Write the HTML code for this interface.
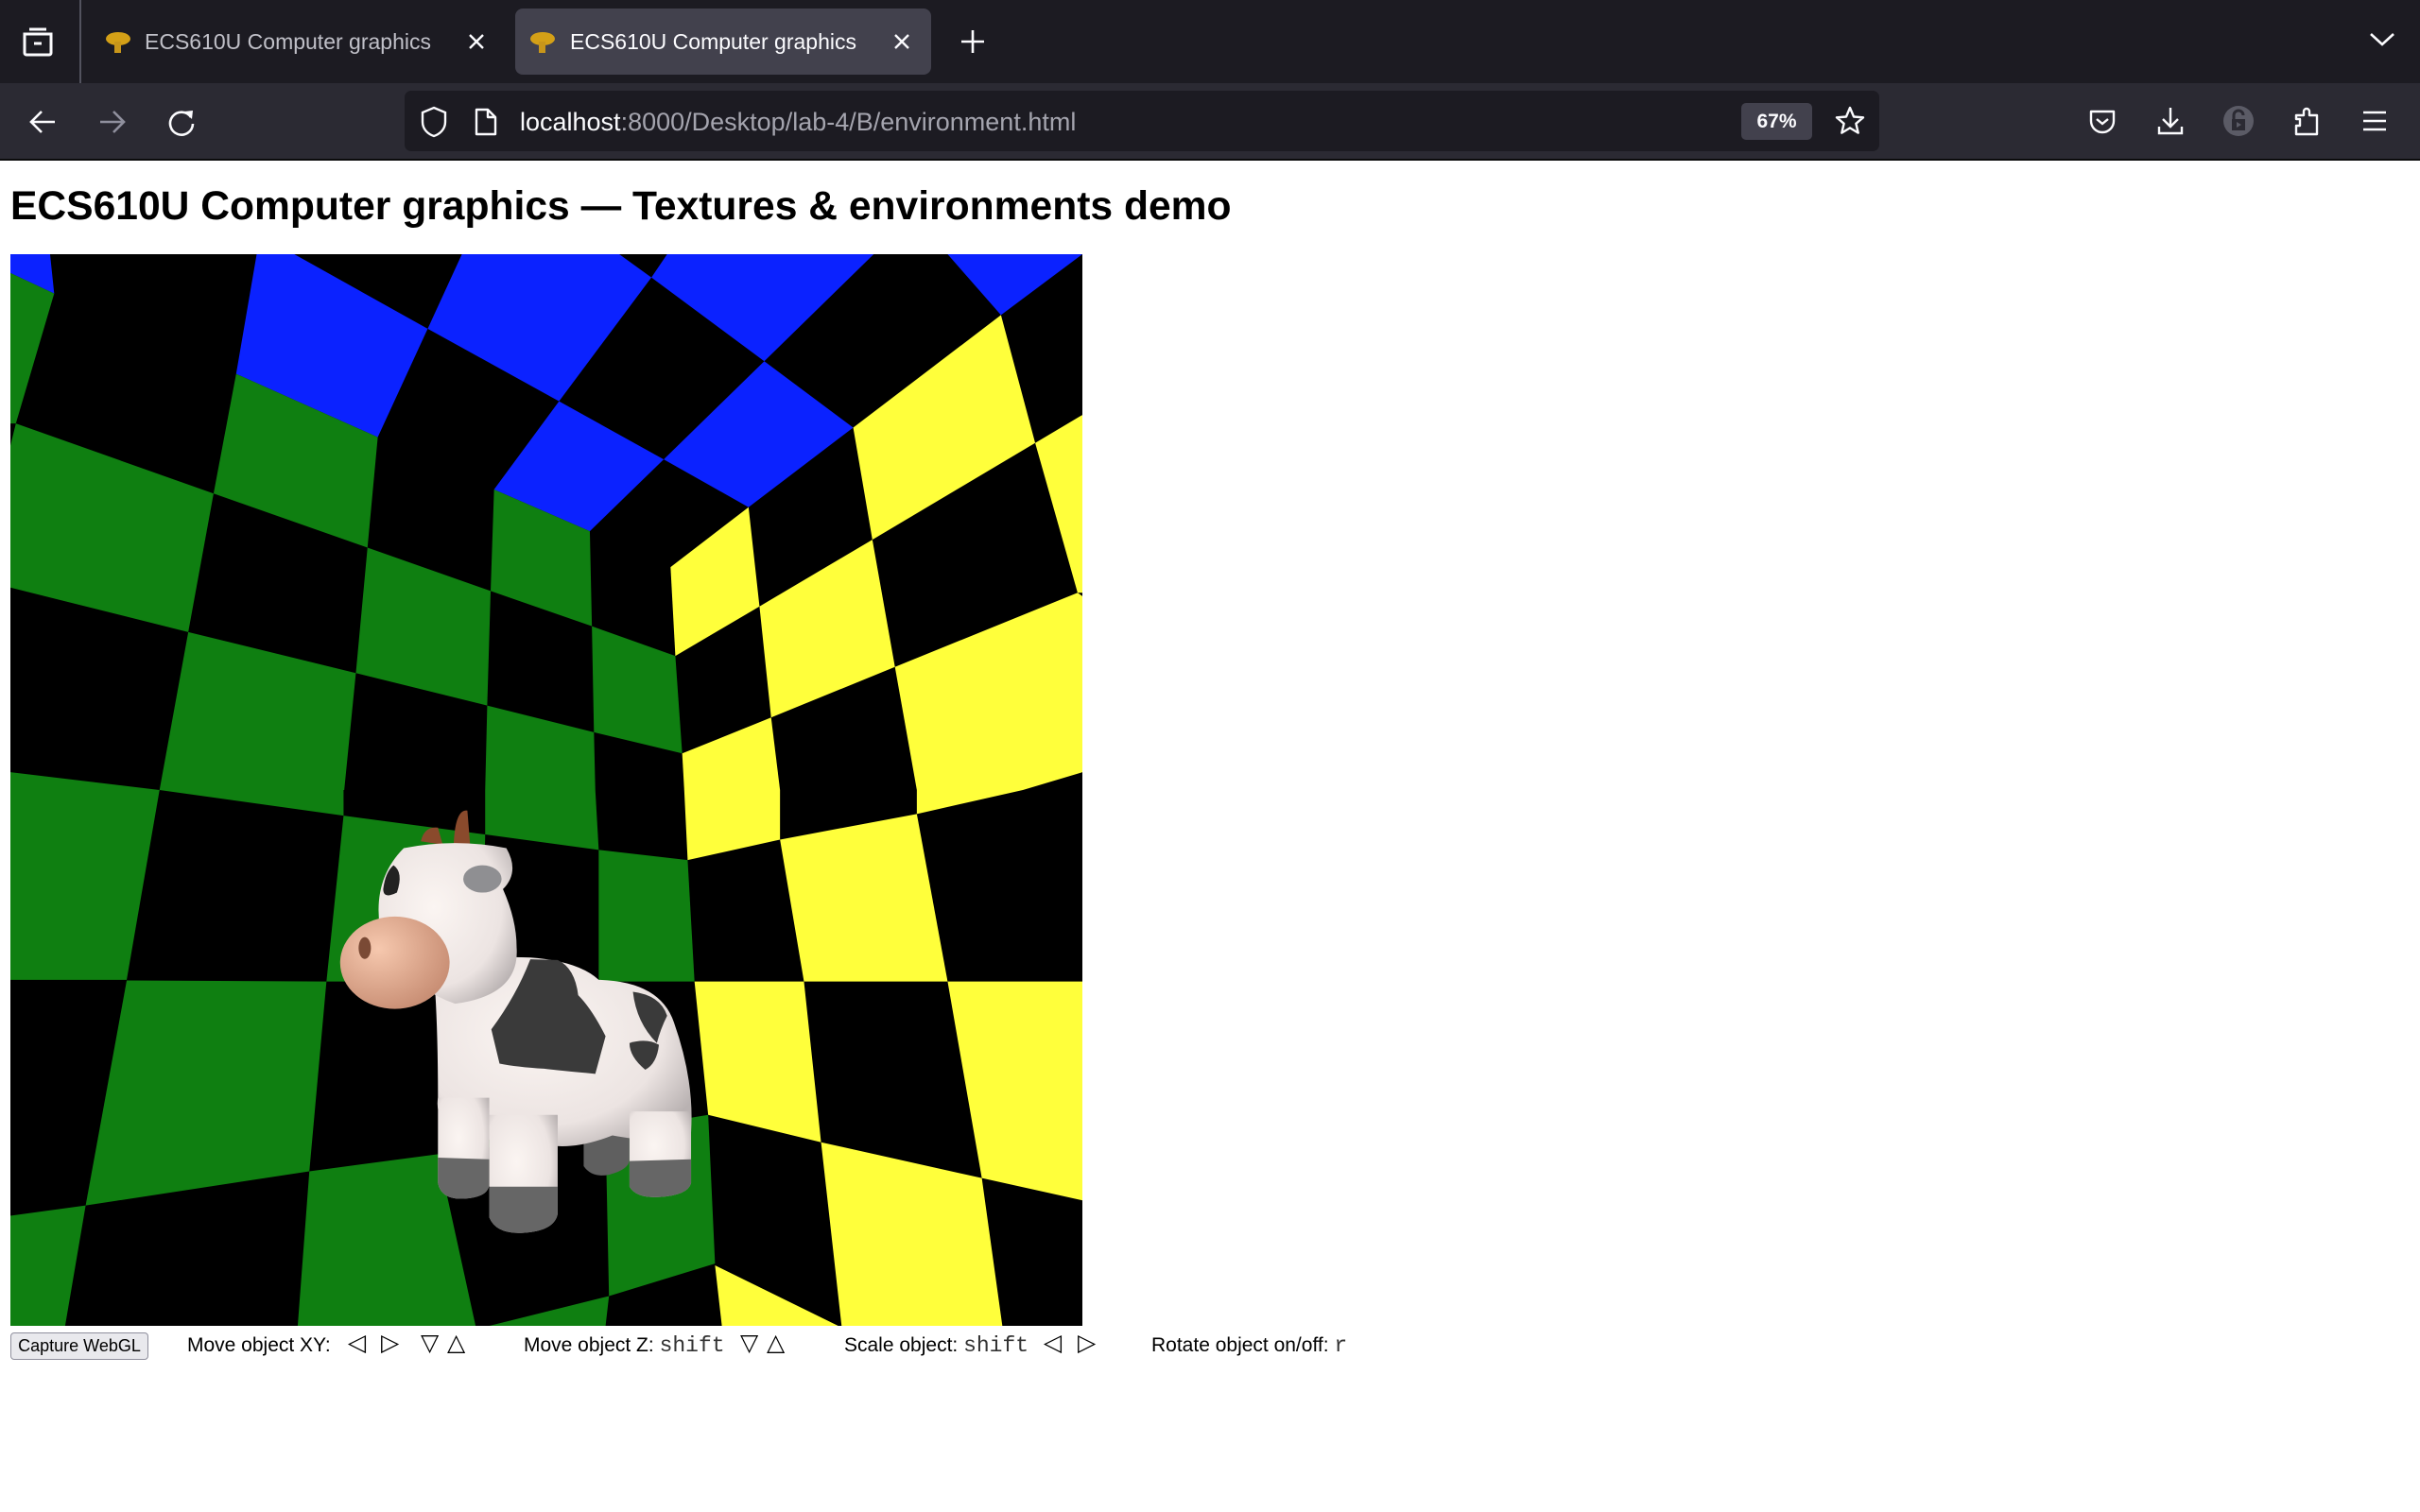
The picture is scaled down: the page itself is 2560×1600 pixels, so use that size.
<!DOCTYPE html>
<html><head><meta charset="utf-8"><style>
*{margin:0;padding:0;box-sizing:border-box}
html,body{width:2560px;height:1600px;overflow:hidden;background:#fff;font-family:"Liberation Sans",sans-serif}
.abs{position:absolute}
#tabbar{left:0;top:0;width:2560px;height:88px;background:#1c1b22}
#nav{left:0;top:88px;width:2560px;height:80px;background:#2b2a33}
#navline{left:0;top:168px;width:2560px;height:2px;background:#0c0c0d}
.tabtxt{font-size:23px;line-height:28px;top:30px;white-space:nowrap}
.ctl{font-size:21px;line-height:26px;top:1411px;color:#000;white-space:nowrap}
.mono{font-family:"Liberation Mono",monospace;font-size:23px;color:#333}
.sym{font-family:"DejaVu Sans",sans-serif;font-size:25px;display:inline-block}
</style></head><body>
<div id="tabbar" class="abs"></div>
<div id="nav" class="abs"></div>
<div id="navline" class="abs"></div>
<svg class="abs" style="left:20px;top:28px" width="40" height="34" viewBox="0 0 40 34"><path d="M11 3h18M6 8h28v20a2 2 0 0 1-2 2H8a2 2 0 0 1-2-2z" fill="none" stroke="#fbfbfe" stroke-width="3"/><path d="M16 18h8" stroke="#fbfbfe" stroke-width="3"/></svg>
<div class="abs" style="left:84px;top:0;width:2px;height:88px;background:#52525e"></div>
<svg class="abs" style="left:110px;top:32px" width="30" height="26" viewBox="0 0 30 26"><ellipse cx="15" cy="9" rx="13" ry="7" fill="#d4a017"/><rect x="11" y="12" width="7" height="12" fill="#c8961a"/></svg>
<div class="abs tabtxt" style="left:153px;color:#c0c0c8">ECS610U Computer graphics</div>
<svg class="abs" style="left:494px;top:34px" width="20" height="20"><path d="M3 3L17 17M17 3L3 17" stroke="#fbfbfe" stroke-width="2.4"/></svg>
<div class="abs" style="left:545px;top:9px;width:440px;height:70px;background:#42414d;border-radius:8px"></div>
<svg class="abs" style="left:559px;top:32px" width="30" height="26" viewBox="0 0 30 26"><ellipse cx="15" cy="9" rx="13" ry="7" fill="#d4a017"/><rect x="11" y="12" width="7" height="12" fill="#c8961a"/></svg>
<div class="abs tabtxt" style="left:603px;color:#fbfbfe">ECS610U Computer graphics</div>
<svg class="abs" style="left:944px;top:34px" width="20" height="20"><path d="M3 3L17 17M17 3L3 17" stroke="#fbfbfe" stroke-width="2.4"/></svg>
<svg class="abs" style="left:1016px;top:31px" width="26" height="26"><path d="M13 1V25M1 13H25" stroke="#fbfbfe" stroke-width="2.6"/></svg>
<svg class="abs" style="left:2506px;top:33px" width="28" height="18"><path d="M2 3L14 14L26 3" fill="none" stroke="#fbfbfe" stroke-width="2.6"/></svg>
<svg class="abs" style="left:30px;top:115px" width="30" height="28"><path d="M28 14H3M14 3L3 14L14 25" fill="none" stroke="#fbfbfe" stroke-width="2.6"/></svg>
<svg class="abs" style="left:104px;top:115px" width="30" height="28"><path d="M2 14H27M16 3L27 14L16 25" fill="none" stroke="#8f8f9d" stroke-width="2.6"/></svg>
<svg class="abs" style="left:176px;top:114px" width="32" height="32"><path d="M26 10A12 12 0 1 0 28 17" fill="none" stroke="#fbfbfe" stroke-width="2.6"/><path d="M19 4L28 3L27 12Z" fill="#fbfbfe"/></svg>
<div class="abs" style="left:428px;top:96px;width:1560px;height:64px;background:#1c1b22;border-radius:7px"></div>
<svg class="abs" style="left:444px;top:112px" width="30" height="34"><path d="M15 2L27 7V17C27 25 21 30 15 32C9 30 3 25 3 17V7Z" fill="none" stroke="#fbfbfe" stroke-width="2.4"/></svg>
<svg class="abs" style="left:501px;top:113px" width="26" height="32"><path d="M3 3H15L23 11V29H3Z M15 3V11H23" fill="none" stroke="#fbfbfe" stroke-width="2.4" stroke-linejoin="round"/></svg>
<div class="abs" style="left:550px;top:112px;font-size:27px;line-height:34px;white-space:nowrap"><span style="color:#fbfbfe">localhost</span><span style="color:#a4a4ae">:8000/Desktop/lab-4/B/environment.html</span></div>
<div class="abs" style="left:1842px;top:109px;width:75px;height:39px;background:#42414d;border-radius:5px;color:#fbfbfe;font-size:21px;line-height:39px;text-align:center;font-weight:bold">67%</div>
<svg class="abs" style="left:1940px;top:111px" width="34" height="34" viewBox="0 0 34 34"><path d="M17 3L21 12.5L31 13.3L23.4 19.8L25.7 29.6L17 24.4L8.3 29.6L10.6 19.8L3 13.3L13 12.5Z" fill="none" stroke="#fbfbfe" stroke-width="2.4" stroke-linejoin="round"/></svg>
<svg class="abs" style="left:2209px;top:114px" width="30" height="30"><path d="M3 4H27V14A12 12 0 0 1 3 14Z" fill="none" stroke="#fbfbfe" stroke-width="2.4" stroke-linejoin="round"/><path d="M9 12L15 17L21 12" fill="none" stroke="#fbfbfe" stroke-width="2.4"/></svg>
<svg class="abs" style="left:2281px;top:112px" width="30" height="32"><path d="M15 2V22M7 14L15 22L23 14M3 22V29H27V22" fill="none" stroke="#fbfbfe" stroke-width="2.4"/></svg>
<svg class="abs" style="left:2352px;top:112px" width="32" height="32"><circle cx="16" cy="16" r="16" fill="#5b5b66"/><rect x="9" y="14" width="14" height="12" fill="#2b2a33"/><path d="M11 14V10A5 5 0 0 1 21 10" fill="none" stroke="#2b2a33" stroke-width="3"/><path d="M14 17L19 20L14 23Z" fill="#5b5b66"/></svg>
<svg class="abs" style="left:2426px;top:111px" width="30" height="34"><path d="M3 22H7V15H3V11H11V7A3 3 0 0 1 17 7V11H25V31H3Z" fill="none" stroke="#fbfbfe" stroke-width="2.4" stroke-linejoin="round"/></svg>
<svg class="abs" style="left:2499px;top:116px" width="26" height="24"><path d="M1 3H25M1 12H25M1 21H25" stroke="#fbfbfe" stroke-width="2.4"/></svg>
<div class="abs" style="left:11px;top:191px;font-size:42.6px;line-height:54px;font-weight:bold;color:#000;white-space:nowrap">ECS610U Computer graphics — Textures &amp; environments demo</div>
<svg class="abs" style="left:11px;top:269px" width="1134" height="567" viewBox="0 0 1567 1567" preserveAspectRatio="none">
<rect width="1567" height="1567" fill="#000"/>
<g fill="#0b22ff">
<polygon points="0,0 58,0 64,115 0,55"/>
<polygon points="360,0 415,0 610,218 537,535 330,350"/>
<polygon points="660,0 890,0 937,68 802,430 610,218"/>
<polygon points="960,0 1262,0 1102,313 937,68"/>
<polygon points="1370,0 1567,0 1448,178"/>
<polygon points="802,430 955,600 847,810 707,688"/>
<polygon points="955,600 1102,313 1232,507 1079,740"/>
</g>
<g fill="#0f7f11">
<polygon points="0,55 64,115 8,495 0,495"/>
<polygon points="8,495 297,700 260,1105 0,975 0,560"/>
<polygon points="330,350 537,535 522,858 297,700"/>
<polygon points="522,858 702,985 697,1320 505,1225"/>
<polygon points="707,688 847,810 850,1088 702,985"/>
<polygon points="850,1088 972,1175 982,1460 853,1398"/>
<polygon points="260,1105 505,1225 488,1567 218,1567"/>
<polygon points="697,1320 853,1398 855,1567 694,1567"/>
<polygon points="0,1515 218,1567 0,1567"/>
</g>
<g fill="#ffff3b">
<polygon points="965,915 1079,740 1095,1030 972,1175"/>
<polygon points="1232,507 1448,178 1498,552 1260,835"/>
<polygon points="1498,552 1567,470 1567,990 1560,990"/>
<polygon points="1095,1030 1260,835 1293,1207 1112,1355"/>
<polygon points="1293,1207 1560,990 1567,1000 1567,1515 1480,1567 1325,1567"/>
<polygon points="982,1460 1112,1355 1125,1567 985,1567"/>
</g>
</svg>
<svg class="abs" style="left:11px;top:836px" width="1134" height="567" viewBox="0 0 1567 1567" preserveAspectRatio="none">
<defs>
<radialGradient id="wb" cx="0.4" cy="0.4" r="0.7"><stop offset="0" stop-color="#fbf5f2"/><stop offset="0.7" stop-color="#ece4e2"/><stop offset="1" stop-color="#b9b2b2"/></radialGradient>
<radialGradient id="pk" cx="0.35" cy="0.35" r="0.75"><stop offset="0" stop-color="#f6c8ae"/><stop offset="1" stop-color="#c58a70"/></radialGradient>
</defs>
<rect width="1567" height="1567" fill="#000"/>
<g fill="#0f7f11">
<polygon points="0,0 218,0 170,555 0,555"/>
<polygon points="218,0 487,0 487,75"/>
<polygon points="487,75 694,130 690,560 462,560"/>
<polygon points="694,0 855,0 860,175 694,130"/>
<polygon points="860,175 990,205 1000,560 860,560"/>
<polygon points="170,557 462,560 437,1115 110,1215"/>
<polygon points="690,560 860,560 870,1000 625,1065 690,560"/>
<polygon points="0,1245 110,1215 80,1567 0,1567"/>
<polygon points="437,1115 625,1065 680,1567 420,1567"/>
<polygon points="870,1000 1020,950 1030,1385 875,1480"/>
<polygon points="700,1567 875,1480 870,1567"/>
</g>
<g fill="#ffff3b">
<polygon points="985,0 1125,0 1125,145 990,205"/>
<polygon points="1325,0 1480,0 1325,70"/>
<polygon points="1125,145 1325,70 1370,560 1160,560"/>
<polygon points="1000,560 1160,560 1185,1030 1020,950"/>
<polygon points="1370,560 1567,560 1567,1200 1420,1135"/>
<polygon points="1185,1030 1420,1135 1450,1567 1215,1567"/>
<polygon points="1030,1390 1210,1567 1040,1567"/>
</g>
<path d="M600,150 Q605,105 625,110 L632,160Z" fill="#8a4a2c"/>
<path d="M648,160 Q650,55 668,60 L672,160Z" fill="#8a4a2c"/>
<path d="M838,980 L838,1100 Q850,1135 875,1125 Q905,1110 905,1080 L905,980Z" fill="#5f5f5f"/>
<path d="M620,560 Q640,480 760,490 Q830,500 860,555 Q950,560 970,680 Q1000,850 995,1000 Q960,1040 880,1010 Q830,1050 790,1040 Q700,1030 650,1000 Q620,960 625,900 Q625,700 620,560Z" fill="url(#wb)"/>
<path d="M625,900 L625,1150 Q630,1200 665,1195 Q700,1190 700,1150 L700,900Z" fill="url(#wb)"/>
<path d="M625,1075 L625,1150 Q630,1200 665,1195 Q700,1190 700,1150 L700,1080Z" fill="#676767"/>
<path d="M700,950 L700,1250 Q710,1300 750,1295 Q795,1290 800,1240 L800,950Z" fill="url(#wb)"/>
<path d="M700,1160 L700,1250 Q710,1300 750,1295 Q795,1290 800,1240 L800,1160Z" fill="#666"/>
<path d="M905,940 L905,1160 Q915,1195 950,1190 Q990,1185 995,1150 L995,940Z" fill="url(#wb)"/>
<path d="M905,1085 L905,1160 Q915,1195 950,1190 Q990,1185 995,1150 L995,1080Z" fill="#666"/>
<path d="M703,700 Q740,600 760,495 L800,497 Q825,520 830,600 Q850,640 870,720 L855,830 Q800,820 780,815 Q740,810 715,800Z" fill="#3a3a3a"/>
<path d="M910,590 Q950,600 960,660 Q950,700 945,740 Q915,680 910,590Z" fill="#3a3a3a"/>
<path d="M905,740 Q930,725 948,745 Q945,800 928,818 Q905,780 905,740Z" fill="#3a3a3a"/>
<path d="M575,170 Q650,140 725,170 Q745,240 720,290 Q740,380 740,460 Q745,600 650,625 Q570,570 540,400 Q530,260 575,170Z" fill="url(#wb)"/>
<ellipse cx="690" cy="260" rx="28" ry="40" fill="#8f8f92"/>
<path d="M560,220 Q575,240 565,300 Q545,320 545,290 Q548,240 560,220Z" fill="#222"/>
<ellipse cx="562" cy="505" rx="80" ry="135" fill="url(#pk)"/>
<ellipse cx="518" cy="462" rx="9" ry="32" fill="#7a4a35"/>
</svg>
<div class="abs" style="left:11px;top:1410px;width:146px;height:29px;background:#e9e9ed;border:1px solid #8f8f9d;border-radius:4px;font-size:18px;line-height:27px;text-align:center;color:#000">Capture WebGL</div>
<div class="abs ctl" style="left:198px">Move object XY:</div>
<div class="abs ctl sym" style="left:368px;top:1408px">◁</div>
<div class="abs ctl sym" style="left:403px;top:1408px">▷</div>
<div class="abs ctl sym" style="left:445px;top:1408px">▽</div>
<div class="abs ctl sym" style="left:473px;top:1408px">△</div>
<div class="abs ctl" style="left:554px">Move object Z: <span class="mono">shift</span></div>
<div class="abs ctl sym" style="left:783px;top:1408px">▽</div>
<div class="abs ctl sym" style="left:811px;top:1408px">△</div>
<div class="abs ctl" style="left:893px">Scale object: <span class="mono">shift</span></div>
<div class="abs ctl sym" style="left:1104px;top:1408px">◁</div>
<div class="abs ctl sym" style="left:1140px;top:1408px">▷</div>
<div class="abs ctl" style="left:1218px">Rotate object on/off: <span class="mono">r</span></div>
</body></html>
